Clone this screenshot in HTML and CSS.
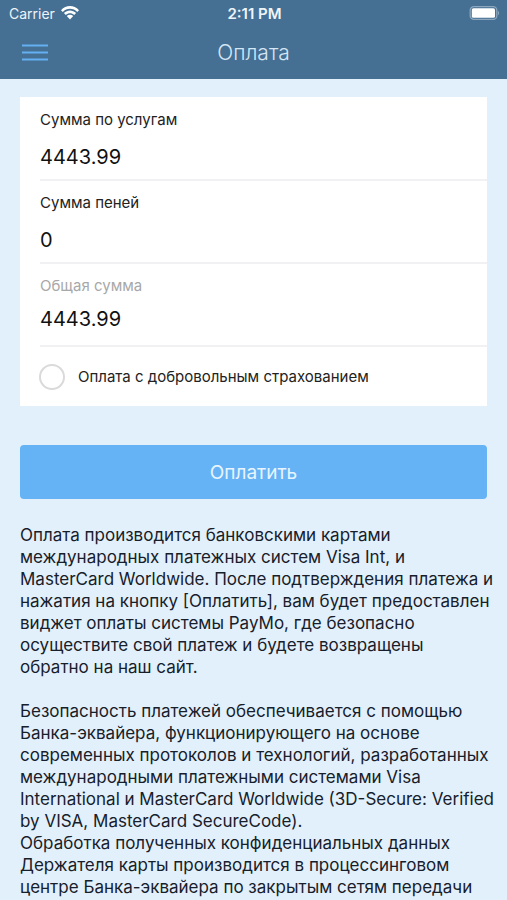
FILE: index.html
```html
<!DOCTYPE html>
<html lang="ru">
<head>
<meta charset="utf-8">
<meta name="viewport" content="width=device-width, initial-scale=1">
<title>Оплата</title>
<link rel="stylesheet" href="styles.css">
</head>
<body>
<header class="header">
  <div class="status">
    <div class="status-side">
      <span>Carrier</span>
      <svg class="wifi" viewBox="0 0 18 14" aria-hidden="true">
        <path d="M0 4.2C5-1.4 13-1.4 18 4.2L16.2 6C12.3 1.8 5.7 1.8 1.8 6Z"/>
        <path d="M2.9 7.1C6.4 3.5 11.6 3.5 15.1 7.1L13.2 9C10.8 6.6 7.2 6.6 4.8 9Z"/>
        <path d="M5.8 10C7.7 8.2 10.3 8.2 12.2 10L9 13.5Z"/>
      </svg>
    </div>
    <time class="clock">2:11 PM</time>
    <div class="status-side status-end">
      <svg class="battery" viewBox="0 0 31 14" aria-hidden="true">
        <rect class="battery-case" x="1.2" y="0.7" width="26.6" height="12.6" rx="3.6"/>
        <rect class="battery-level" x="2.8" y="2.2" width="23.2" height="9.6" rx="1.6"/>
        <path class="battery-tip" d="M29 4.7Q31.4 7 29 9.3Z"/>
      </svg>
    </div>
  </div>
  <nav class="navbar">
    <button class="menu" type="button" aria-label="Меню">
      <svg class="menu-icon" viewBox="0 0 26 17" aria-hidden="true">
        <path d="M0 1.5H26M0 8.5H26M0 15.5H26"/>
      </svg>
    </button>
    <h1 class="title">Оплата</h1>
  </nav>
</header>
<main class="content">
  <form class="form">
    <div class="card">
      <div class="field">
        <label class="label" for="services">Сумма по услугам</label>
        <input class="value" id="services" type="text" inputmode="decimal" value="4443.99">
      </div>
      <div class="field">
        <label class="label" for="penalty">Сумма пеней</label>
        <input class="value" id="penalty" type="text" inputmode="decimal" value="0">
      </div>
      <div class="field field-total">
        <label class="label label-muted" for="total">Общая сумма</label>
        <input class="value" id="total" type="text" value="4443.99" readonly>
      </div>
      <div class="option">
        <input class="check" id="insurance" type="checkbox">
        <label class="label" for="insurance">Оплата с добровольным страхованием</label>
      </div>
    </div>
    <button class="pay" type="button">Оплатить</button>
  </form>
  <section class="info">
    <p>Оплата производится банковскими картами<br>
    международных платежных систем Visa Int, и<br>
    MasterCard Worldwide. После подтверждения платежа и<br>
    нажатия на кнопку [Оплатить], вам будет предоставлен<br>
    виджет оплаты системы PayMo, где безопасно<br>
    осуществите свой платеж и будете возвращены<br>
    обратно на наш сайт.</p>
    <p>Безопасность платежей обеспечивается с помощью<br>
    Банка-эквайера, функционирующего на основе<br>
    современных протоколов и технологий, разработанных<br>
    международными платежными системами Visa<br>
    International и MasterCard Worldwide (3D-Secure: Verified<br>
    by VISA, MasterCard SecureCode).<br>
    Обработка полученных конфиденциальных данных<br>
    Держателя карты производится в процессинговом<br>
    центре Банка-эквайера по закрытым сетям передачи</p>
  </section>
</main>
</body>
</html>
```
FILE: styles.css
```css
* {
  box-sizing: border-box;
}

body {
  margin: 0;
  min-height: 100vh;
  background: #e2f0fc;
  color: #17202a;
  font-family: Inter, "Liberation Sans", sans-serif;
}

.header {
  background: #456f93;
}

.status {
  display: flex;
  align-items: center;
  height: 26px;
  padding: 0 7px 0 9px;
  color: #edf4fa;
  font-size: 14px;
}

.status-side {
  display: flex;
  flex: 1;
  align-items: center;
  gap: 6px;
}

.status-end {
  justify-content: flex-end;
}

.wifi {
  width: 18px;
  height: 14px;
  fill: #fff;
}

.clock {
  font-size: 15px;
  font-weight: 600;
}

.battery {
  width: 31px;
  height: 14px;
}

.battery-case {
  fill: none;
  stroke: #8ba6bd;
  stroke-width: 1.3;
}

.battery-level {
  fill: #fff;
}

.battery-tip {
  fill: #8ba6bd;
}

.navbar {
  display: grid;
  grid-template-columns: 48px 1fr 48px;
  align-items: center;
  height: 53px;
}

.menu {
  display: flex;
  width: 48px;
  height: 52px;
  padding: 0 0 0 22px;
  align-items: center;
  border: 0;
  background: none;
}

.menu-icon {
  width: 26px;
  height: 17px;
  fill: none;
  stroke: #64b0f2;
  stroke-width: 2.2;
}

.title {
  margin: 0;
  color: #d5e6f5;
  font-size: 21px;
  font-weight: 300;
  line-height: 52px;
  text-align: center;
}

.content {
  padding: 18px 20px 0;
}

.card {
  padding: 1px 0 0 20px;
  background: #fff;
}

.field {
  display: flex;
  flex-direction: column;
  gap: 14px;
  height: 83px;
  padding-top: 11px;
  border-bottom: 2px solid #f1f1f3;
}

.field-total {
  gap: 10px;
}

.label {
  color: #222;
  font-size: 15px;
  line-height: 22px;
}

.label-muted {
  color: #a8a8a8;
}

.value {
  width: 100%;
  height: 24px;
  padding: 0;
  border: 0;
  outline: 0;
  background: none;
  color: #111;
  font-family: inherit;
  font-size: 20px;
}

.option {
  display: flex;
  align-items: center;
  gap: 13px;
  height: 59px;
}

.check {
  width: 26px;
  height: 26px;
  margin: 0 0 0 -1px;
  appearance: none;
  border: 2px solid #dadada;
  border-radius: 50%;
  background: #fff;
}

.check:checked {
  background: #65b3f5;
}

.pay {
  display: block;
  width: 100%;
  height: 54px;
  margin-top: 39px;
  border: 0;
  border-radius: 4px;
  background: #65b3f5;
  color: #e8f5ff;
  font-family: inherit;
  font-size: 19px;
}

.info {
  margin-top: 25px;
  font-size: 17px;
  line-height: 22px;
  white-space: nowrap;
}

.info p {
  margin: 0 0 22px;
}

.info p:last-child {
  margin-bottom: 0;
}
```
